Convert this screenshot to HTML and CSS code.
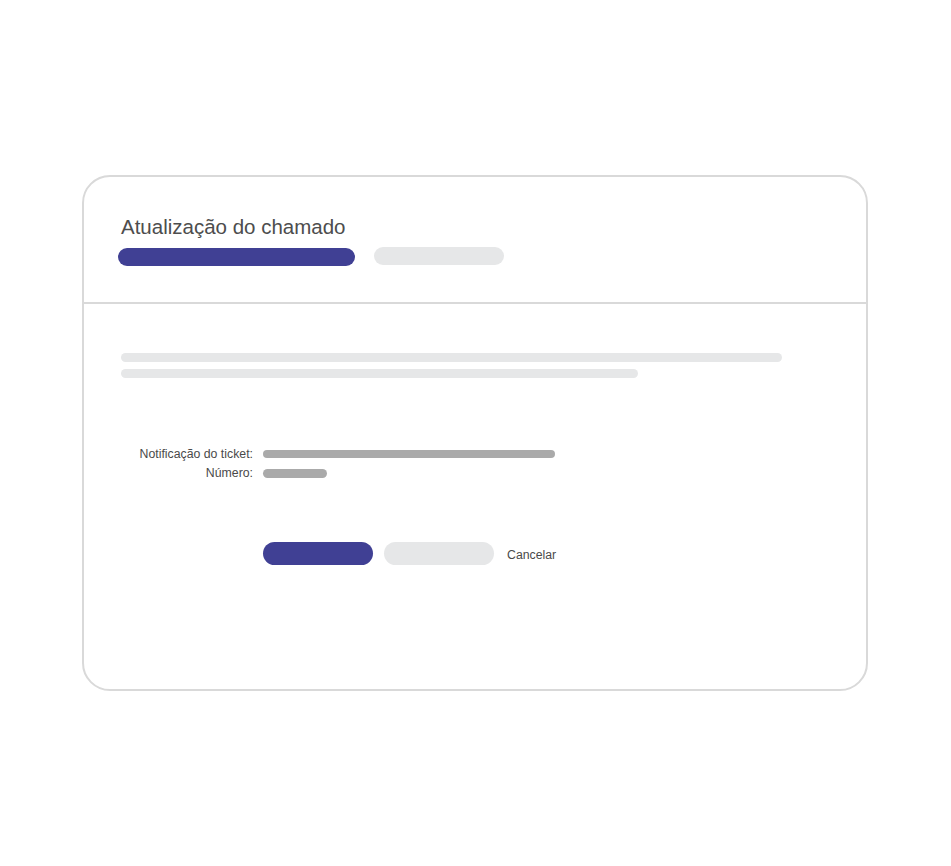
FILE: index.html
```html
<!DOCTYPE html>
<html lang="pt-BR">
  <head>
    <meta charset="UTF-8" />
    <meta name="viewport" content="width=device-width, initial-scale=1.0" />
    <title>Atualização do chamado</title>
    <link rel="stylesheet" href="styles.css">
  </head>
  <body>
    <div class="card">
      <div class="card-head">
        <h1 class="title">Atualização do chamado</h1>
        <div class="tabs">
          <span class="tab tab-active"></span>
          <span class="tab"></span>
        </div>
      </div>

      <div class="card-body">
        <div class="intro">
          <span class="line line-long"></span>
          <span class="line line-short"></span>
        </div>

        <div class="fields">
          <span class="label">Notificação do ticket:</span>
          <span class="value value-long"></span>
          <span class="label">Número:</span>
          <span class="value value-short"></span>
        </div>

        <div class="actions">
          <button class="btn btn-primary"></button>
          <button class="btn btn-secondary"></button>
          <a class="cancel" href="#">Cancelar</a>
        </div>
      </div>
    </div>
  </body>
</html>
```

FILE: styles.css
```css
* {
  padding: 0;
  margin: 0;
  box-sizing: border-box;
}
body {
  background: #fff;
  font-family: "Liberation Sans", Arial, sans-serif;
  color: #4a4a4a;
}

.card {
  width: 786px;
  height: 516px;
  margin: 175px 0 0 82px;
  border: 2px solid #d9d9d9;
  border-radius: 28px;
  background: #fff;
}

.card-head {
  padding: 38px 0 36px 34px;
  border-bottom: 2px solid #d9d9d9;
}
.title {
  font-size: 20.5px;
  font-weight: normal;
  line-height: 24px;
  padding-left: 3px;
  color: #4d4d4d;
}
.tabs {
  display: flex;
  align-items: flex-start;
  gap: 19px;
  margin-top: 8px;
}
.tab {
  display: block;
  width: 130px;
  height: 18px;
  border-radius: 9px;
  background: #e6e7e8;
}
.tab-active {
  width: 237px;
  margin-top: 1px;
  background: #404094;
}

.card-body {
  padding: 49px 0 0 37px;
}
.intro {
  display: flex;
  flex-direction: column;
  gap: 7px;
}
.line {
  display: block;
  height: 9px;
  border-radius: 5px;
  background: #e6e7e8;
}
.line-long {
  width: 661px;
}
.line-short {
  width: 517px;
}

.fields {
  display: grid;
  grid-template-columns: 132px auto;
  grid-auto-rows: 19.5px;
  column-gap: 10px;
  align-items: center;
  margin-top: 66px;
}
.label {
  font-size: 12.3px;
  text-align: right;
  white-space: nowrap;
}
.value {
  display: block;
  height: 8.5px;
  border-radius: 5px;
  background: #aaaaaa;
}
.value-long {
  width: 292px;
}
.value-short {
  width: 64px;
}

.actions {
  display: flex;
  align-items: center;
  margin: 59px 0 0 142px;
}
.btn {
  width: 110px;
  height: 22.5px;
  border: none;
  border-radius: 12px;
  cursor: pointer;
}
.btn-primary {
  background: #404094;
}
.btn-secondary {
  margin-left: 11px;
  background: #e6e7e8;
}
.cancel {
  margin: 4px 0 0 13px;
  font-size: 12.3px;
  color: #4a4a4a;
  text-decoration: none;
}
```
